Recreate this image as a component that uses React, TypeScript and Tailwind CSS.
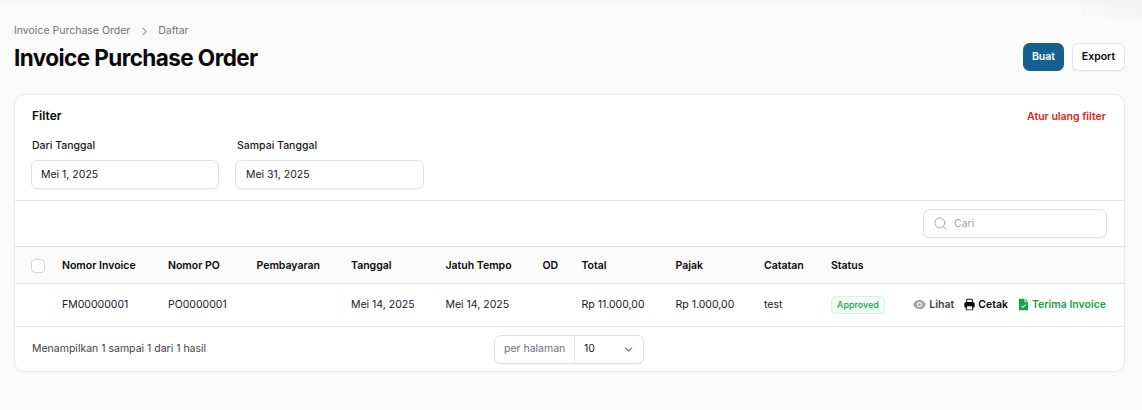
import { ChevronRight, ChevronDown, Search } from "lucide-react";

const cols = [
  { w: "w-[47px]", label: "" },
  { w: "w-[106px]", label: "Nomor Invoice" },
  { w: "w-[88.5px]", label: "Nomor PO" },
  { w: "w-[94.5px]", label: "Pembayaran" },
  { w: "w-[94.5px]", label: "Tanggal" },
  { w: "w-[97px]", label: "Jatuh Tempo" },
  { w: "w-[39px]", label: "OD" },
  { w: "w-[94px]", label: "Total" },
  { w: "w-[88.5px]", label: "Pajak" },
  { w: "w-[67px]", label: "Catatan" },
  { w: "w-[83px]", label: "Status" },
];

const row = ["", "FM00000001", "PO0000001", "", "Mei 14, 2025", "Mei 14, 2025", "", "Rp 11.000,00", "Rp 1.000,00", "test"];

function Eye() {
  return (
    <svg viewBox="0 0 20 20" fill="currentColor" className="w-[13px] h-[13px]">
      <path d="M10 12.5a2.5 2.5 0 1 0 0-5 2.5 2.5 0 0 0 0 5Z" />
      <path fillRule="evenodd" clipRule="evenodd" d="M.664 10.59a1.651 1.651 0 0 1 0-1.186A10.004 10.004 0 0 1 10 3c4.257 0 7.893 2.66 9.336 6.41.147.381.146.804 0 1.186A10.004 10.004 0 0 1 10 17c-4.257 0-7.893-2.66-9.336-6.41ZM14 10a4 4 0 1 1-8 0 4 4 0 0 1 8 0Z" />
    </svg>
  );
}

function Printer() {
  return (
    <svg viewBox="0 0 20 20" fill="currentColor" className="w-[13px] h-[13px]">
      <path fillRule="evenodd" clipRule="evenodd" d="M5 2.75C5 1.784 5.784 1 6.75 1h6.5c.966 0 1.75.784 1.75 1.75v3.552c.377.046.752.097 1.126.153A2.212 2.212 0 0 1 18 8.653v4.097A2.25 2.25 0 0 1 15.75 15h-.241l.305 1.984A1.75 1.75 0 0 1 14.084 19H5.915a1.75 1.75 0 0 1-1.73-2.016L4.492 15H4.25A2.25 2.25 0 0 1 2 12.75V8.653c0-1.082.775-2.034 1.874-2.198.374-.056.75-.107 1.127-.153L5 2.75Zm8.5 3.397a41.533 41.533 0 0 0-7 0V2.75a.25.25 0 0 1 .25-.25h6.5a.25.25 0 0 1 .25.25v3.397ZM6.608 12.5a.25.25 0 0 0-.247.212l-.693 4.5a.25.25 0 0 0 .247.288h8.17a.25.25 0 0 0 .246-.288l-.692-4.5a.25.25 0 0 0-.247-.212H6.608Z" />
    </svg>
  );
}

function DocCheck() {
  return (
    <svg viewBox="0 0 16 20" fill="currentColor" className="w-[11px] h-[13px]">
      <path fillRule="evenodd" clipRule="evenodd" d="M2 1h7.5v4.5a1 1 0 0 0 1 1H15V17.5a1.5 1.5 0 0 1-1.5 1.5h-11A1.5 1.5 0 0 1 1 17.5v-15A1.5 1.5 0 0 1 2 1Zm9 .3 3.7 3.9H11V1.3Zm.6 9.6a.7.7 0 0 0-1-1l-3.4 3.5-1.4-1.4a.7.7 0 0 0-1 1l1.9 1.9a.7.7 0 0 0 1 0l3.9-4Z" />
    </svg>
  );
}

export default function App() {
  return (
    <div className="relative min-h-[410px] bg-[#fafafa] pl-[14px] pr-[17px] pt-[23px] pb-[37px] font-['Inter',sans-serif] text-[10.5px] leading-[16px] text-[#18181b] overflow-hidden">
      <div className="absolute inset-x-0 top-0 h-[2px] bg-[#f6f6f7]" />
      <div className="absolute right-0 top-0 w-[60px] h-[20px] bg-gradient-to-bl from-[#f4f4f4] to-transparent" />

      <div className="flex items-start justify-between">
        <div>
          <nav className="flex items-center h-[16px] text-[#71717a]">
            <span>Invoice Purchase Order</span>
            <ChevronRight className="w-[13px] h-[13px] mx-[7.5px] text-[#a1a1aa]" strokeWidth={2} />
            <span>Daftar</span>
          </nav>
          <h1 className="mt-[3px] text-[22.5px] leading-[32px] font-bold tracking-[-0.58px] text-[#09090b]">Invoice Purchase Order</h1>
        </div>
        <div className="flex gap-[8px] mt-[20px]">
          <button className="h-[28px] w-[41px] rounded-[6.5px] bg-[#156091] text-white font-semibold">Buat</button>
          <button className="h-[28px] w-[53px] rounded-[6.5px] bg-white border border-[#e4e4e7] text-[#09090b] font-semibold shadow-[0_1px_1px_rgba(0,0,0,0.04)]">Export</button>
        </div>
      </div>

      <div className="mt-[20px] rounded-[10px] bg-white border border-[#e9e9eb] shadow-[0_1px_2px_rgba(0,0,0,0.03)] overflow-hidden">
        <div className="h-[106px] px-[17px] border-b border-[#e4e4e7]">
          <div className="flex justify-between items-start pt-[13px]">
            <span className="text-[12px] leading-[16px] font-semibold text-[#09090b]">Filter</span>
            <span className="mr-[1px] pt-[1px] font-semibold text-[#dc2626]">Atur ulang filter</span>
          </div>
          <div className="flex mt-[13px] gap-[16px] -ml-[1px]">
            <div className="w-[188px]">
              <div className="ml-[1px] font-medium h-[16px]">Dari Tanggal</div>
              <div className="mt-[6px] h-[29px] rounded-[6.5px] border border-[#e0e0e3] bg-white flex items-center px-[9px] shadow-[0_1px_1px_rgba(0,0,0,0.04)]">Mei 1, 2025</div>
            </div>
            <div className="w-[189px]">
              <div className="ml-[2px] font-medium h-[16px]">Sampai Tanggal</div>
              <div className="mt-[6px] h-[29px] rounded-[6.5px] border border-[#e0e0e3] bg-white flex items-center px-[10px] shadow-[0_1px_1px_rgba(0,0,0,0.04)]">Mei 31, 2025</div>
            </div>
          </div>
        </div>

        <div className="h-[46px] flex items-center justify-end pr-[17px] border-b border-[#e4e4e7]">
          <div className="w-[184px] h-[29px] rounded-[6.5px] border border-[#e0e0e3] bg-white flex items-center pl-[9px] gap-[6px] shadow-[0_1px_1px_rgba(0,0,0,0.04)]">
            <Search className="w-[15px] h-[15px] text-[#9ca3af]" strokeWidth={1.5} />
            <span className="text-[#a1a1aa]">Cari</span>
          </div>
        </div>

        <table className="w-full table-fixed border-collapse">
          <colgroup>
            {cols.map((c, i) => (
              <col key={i} className={c.w} />
            ))}
            <col />
          </colgroup>
          <thead>
            <tr className="h-[36px] bg-[#fafafa] border-b border-[#e4e4e7]">
              {cols.map((c, i) => (
                <th key={i} className="p-0 pt-[2px] text-left font-semibold text-[#09090b] whitespace-nowrap">
                  {i === 0 ? (
                    <div className="ml-[16px] w-[14px] h-[14px] rounded-[4px] border border-[#d4d4d8] bg-white" />
                  ) : (
                    c.label
                  )}
                </th>
              ))}
              <th className="p-0" />
            </tr>
          </thead>
          <tbody>
            <tr className="h-[43px] border-b border-[#e4e4e7]">
              {row.map((t, i) => (
                <td key={i} className="p-0 whitespace-nowrap text-[#18181b]">{t}</td>
              ))}
              <td className="p-0">
                <span className="inline-flex items-center h-[18px] px-[5px] rounded-[4.5px] bg-[#f0fdf4] border border-[#d5f3e0] text-[9px] font-medium text-[#16a34a]">Approved</span>
              </td>
              <td className="p-0">
                <div className="flex items-center justify-end gap-[10px] pr-[18px] font-semibold whitespace-nowrap">
                  <span className="flex items-center gap-[3px] text-[#3f3f46]"><span className="text-[#a1a1aa]"><Eye /></span>Lihat</span>
                  <span className="-ml-[1px] flex items-center gap-[2px] text-[#09090b]"><Printer />Cetak</span>
                  <span className="flex items-center gap-[3px] text-[#16a34a]"><DocCheck />Terima Invoice</span>
                </div>
              </td>
            </tr>
          </tbody>
        </table>

        <div className="h-[44px] pt-[1px] grid grid-cols-[479px_150px_1fr] items-center">
          <span className="pl-[17px] text-[#3f3f46]">Menampilkan 1 sampai 1 dari 1 hasil</span>
          <div className="flex h-[29px] w-[150px] rounded-[6.5px] border border-[#e0e0e3] bg-white shadow-[0_1px_1px_rgba(0,0,0,0.04)] overflow-hidden">
            <span className="w-[80px] border-r border-[#e4e4e7] flex items-center pl-[9px] text-[#71717a]">per halaman</span>
            <span className="flex-1 flex items-center justify-between pl-[9px] pr-[8px]">10<ChevronDown className="w-[13px] h-[13px] text-[#71717a]" /></span>
          </div>
        </div>
      </div>
    </div>
  );
}
